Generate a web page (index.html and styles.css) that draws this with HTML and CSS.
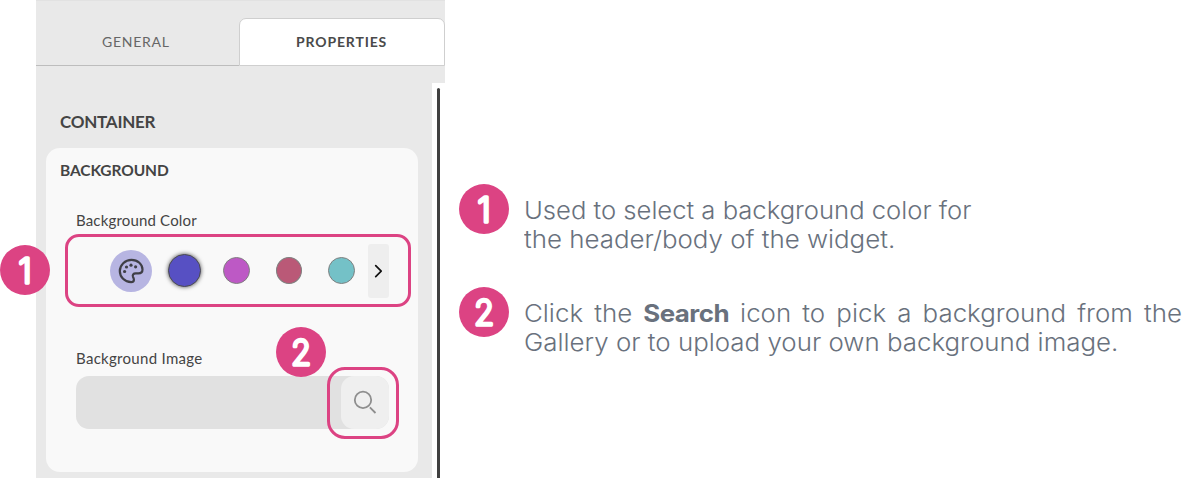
FILE: index.html
```html
<!DOCTYPE html>
<html lang="en">
<head>
<meta charset="utf-8">
<title>Container properties</title>
<link rel="stylesheet" href="styles.css">
</head>
<body>
<main class="page">
  <section class="panel">
    <nav class="tabs">
      <div class="tab"><span class="t-general">GENERAL</span></div>
      <div class="tab tab-active"><span class="t-properties">PROPERTIES</span></div>
    </nav>
    <div class="panel-body">
      <div class="content">
        <h1 class="title"><span class="t-container">CONTAINER</span></h1>
        <div class="card">
          <h2 class="card-title"><span class="t-background">BACKGROUND</span></h2>
          <div class="label"><span class="t-color">Background Color</span></div>
          <div class="swatches">
            <span class="palette">
              <svg width="28" height="28" viewBox="0 0 28 28" fill="none" stroke="#3f3f46" stroke-width="2.2" stroke-linejoin="round"><path d="M14.2 25.2C7.7 25 2.8 20 2.8 14S8 2.9 14.5 2.9C20.800 2.900 25.500 7.300 25.500 12.500C25.500 15.300 23.700 16.400 21.400 16.400H18.700C16.300 16.400 15.300 18 16 19.800C16.500 21 17 21.800 16.900 22.900C16.800 24.500 15.600 25.200 14.200 25.200Z"/><g fill="#3f3f46" stroke="none"><circle cx="7.600" cy="14.500" r="1.600"/><circle cx="9.500" cy="10" r="1.600"/><circle cx="14" cy="8.200" r="1.600"/><circle cx="18.600" cy="9.800" r="1.600"/></g></svg>
            </span>
            <span class="swatch selected"></span>
            <span class="swatch violet"></span>
            <span class="swatch rose"></span>
            <span class="swatch teal"></span>
            <span class="next"><svg width="21" height="54" viewBox="0 0 21 54" fill="none" stroke="#111" stroke-width="1.700" stroke-linecap="round" stroke-linejoin="round"><path d="M7.700 21.700L13.200 27.200L7.700 32.700"/></svg></span>
          </div>
          <div class="label label-image"><span class="t-image">Background Image</span></div>
          <div class="field">
            <span class="search"><svg width="48" height="53" viewBox="0 0 48 53" fill="none" stroke="#8e8e8e" stroke-width="1.800"><circle cx="22" cy="23.900" r="8.200"/><path d="M28.900 31.400L34.500 37"/></svg></span>
          </div>
        </div>
      </div>
      <div class="scrollbar"><span class="thumb"></span></div>
    </div>
  </section>
  <section class="notes">
    <div class="note">
      <svg class="badge" viewBox="0 0 50 50"><circle cx="25" cy="25" r="25"/><text class="digit one" x="18.500" y="37.500">1</text></svg>
      <p class="copy"><span class="line l1">Used to select a background color for</span><span class="line l2">the header/body of the widget.</span></p>
    </div>
    <div class="note">
      <svg class="badge" viewBox="0 0 50 50"><circle cx="25" cy="25" r="25"/><text class="digit" x="15.200" y="37.500" textLength="19.800" lengthAdjust="spacingAndGlyphs">2</text></svg>
      <p class="copy"><span class="line l3">Click the <b>Search</b> icon to pick a background from the</span><span class="line l4">Gallery or to upload your own background image.</span></p>
    </div>
  </section>
  <div class="outline outline-colors"></div>
  <div class="outline outline-search"></div>
  <svg class="badge marker marker-1" viewBox="0 0 50 50"><circle cx="25" cy="25" r="25"/><text class="digit one" x="18.500" y="37.500">1</text></svg>
  <svg class="badge marker marker-2" viewBox="0 0 50 50"><circle cx="25" cy="25" r="25"/><text class="digit" x="15.200" y="37.500" textLength="19.800" lengthAdjust="spacingAndGlyphs">2</text></svg>
</main>
</body>
</html>
```

FILE: styles.css
```css
* { box-sizing: border-box; }
body { margin: 0; background: #fff; overflow: hidden; }
.page { position: relative; display: flex; width: 1200px; height: 478px; padding-left: 36px; overflow: hidden; }
.panel { width: 409px; height: 478px; background: #e9e9e9; border-top: 1px solid #e2e2e2; color: #444; font-family: Lato, "Open Sans", sans-serif; display: flex; flex-direction: column; }
.tabs { display: flex; height: 65px; align-items: flex-end; flex: none; }
.tab { width: 203px; height: 48px; border-bottom: 1px solid #bdbdbd; display: flex; align-items: center; padding-left: 66px; font-size: 14px; line-height: 20px; color: #666; white-space: nowrap; letter-spacing: 0.75px; }
.tab-active { width: 206px; background: #fff; border: 1px solid #cfcfcf; border-radius: 7px 7px 0 0; padding-left: 56px; color: #4a4a4a; font-weight: 700; letter-spacing: 0.85px; }
.panel-body { display: flex; flex: 1; min-height: 0; }
.content { width: 396px; padding: 46px 14px 0 10px; }
.title { margin: 0 0 16px 14px; font-size: 17px; line-height: 20px; font-weight: 700; letter-spacing: -0.25px; }
.card { height: 324px; width: 372px; background: #f9f9f9; border-radius: 14px; padding: 12px 29px 0 30px; }
.card-title { margin: 0 0 0 -16px; font-size: 15.5px; line-height: 20px; font-weight: 700; letter-spacing: -0.1px; }
.label { margin-top: 30px; font-size: 15px; line-height: 20px; white-space: nowrap; letter-spacing: 0.17px; }
.swatches { display: flex; align-items: center; height: 54px; margin-top: 14px; padding-left: 34px; }
.palette, .swatch { margin-bottom: 1px; }
.palette { width: 42px; height: 42px; border-radius: 50%; background: #b7b5e2; display: flex; align-items: center; justify-content: center; flex: none; }
.swatch { width: 27px; height: 27px; border: 1px solid #808080; border-radius: 50%; flex: none; }
.selected { width: 33px; height: 33px; margin: 0 22px 1px 16px; background: #5750c3; border: 1.500px solid #4c4c50; box-shadow: 0 0 4px #555; }
.violet { background: #bd59c5; margin-right: 26px; }
.rose { background: #ba5977; width: 26px; margin-right: 26px; }
.teal { background: #74c1c7; margin-right: 13px; }
.next { width: 21px; height: 54px; background: #eee; border-radius: 3px; flex: none; }
.next svg, .search svg { display: block; }
.label-image { margin-top: 50px; letter-spacing: 0.3px; }
.field { display: flex; justify-content: flex-end; height: 53px; margin-top: 8px; background: #e1e1e1; border-radius: 13px; }
.search { width: 48px; background: #efefef; border-radius: 13px; }
.scrollbar { width: 13px; margin-top: 17px; padding: 5px 5px 0; background: #fff; }
.thumb { display: block; width: 3px; height: 400px; background: #404040; border-radius: 2px 2px 0 0; }
.notes { width: 723px; margin-left: 14px; padding-top: 184px; display: flex; flex-direction: column; gap: 28px; }
.note { display: flex; gap: 15px; height: 75px; }
.badge { width: 50px; height: 50px; fill: #dc4383; flex: none; }
.digit { font-family: Inter, sans-serif; font-size: 34.5px; font-weight: 200; fill: #fff; stroke: #fff; stroke-width: 3.600px; stroke-linejoin: round; }
.copy { margin: 0; padding-top: 11.5px; width: 658px; color: #69717d; font-family: Inter, "Open Sans", sans-serif; font-weight: 300; font-size: 24px; line-height: 29px; }
.copy b { font-weight: 700; letter-spacing: -0.5px; }
.line { display: block; white-space: nowrap; transform-origin: 0 0; }
.l1 { transform: scaleX(1.067); }
.l2, .l4 { transform: scaleX(1.078); }
.l3 { width: 610.4px; white-space: normal; text-align-last: justify; transform: scaleX(1.078); }
.outline { position: absolute; border: 3px solid #dc4383; }
.outline-colors { left: 65px; top: 234px; width: 346px; height: 73px; border-radius: 14px; }
.outline-search { left: 327px; top: 367px; width: 72px; height: 72px; border-radius: 18px; }
.marker { position: absolute; }
.marker-1 { left: 0; top: 245px; }
.marker-2 { left: 276px; top: 327px; }
```
